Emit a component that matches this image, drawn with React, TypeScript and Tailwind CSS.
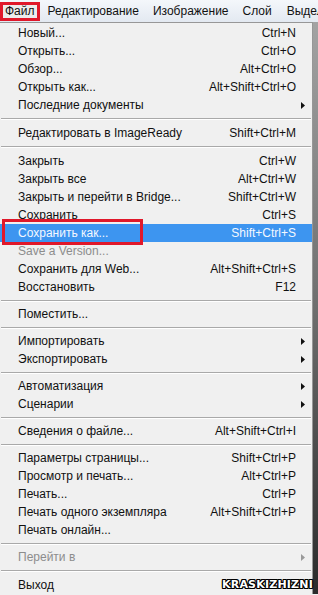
import React from "react";

type Item =
  | { sep: true; h: number }
  | { label: string; keys?: string; sub?: boolean; disabled?: boolean; active?: boolean };

const items: Item[] = [
  { label: "Новый...", keys: "Ctrl+N" },
  { label: "Открыть...", keys: "Ctrl+O" },
  { label: "Обзор...", keys: "Alt+Ctrl+O" },
  { label: "Открыть как...", keys: "Alt+Shift+Ctrl+O" },
  { label: "Последние документы", sub: true },
  { sep: true, h: 10 },
  { label: "Редактировать в ImageReady", keys: "Shift+Ctrl+M" },
  { sep: true, h: 10 },
  { label: "Закрыть", keys: "Ctrl+W" },
  { label: "Закрыть все", keys: "Alt+Ctrl+W" },
  { label: "Закрыть и перейти в Bridge...", keys: "Shift+Ctrl+W" },
  { label: "Сохранить", keys: "Ctrl+S" },
  { label: "Сохранить как...", keys: "Shift+Ctrl+S", active: true },
  { label: "Save a Version...", disabled: true },
  { label: "Сохранить для Web...", keys: "Alt+Shift+Ctrl+S" },
  { label: "Восстановить", keys: "F12" },
  { sep: true, h: 9 },
  { label: "Поместить..." },
  { sep: true, h: 9 },
  { label: "Импортировать", sub: true },
  { label: "Экспортировать", sub: true },
  { sep: true, h: 9 },
  { label: "Автоматизация", sub: true },
  { label: "Сценарии", sub: true },
  { sep: true, h: 9 },
  { label: "Сведения о файле...", keys: "Alt+Shift+Ctrl+I" },
  { sep: true, h: 9 },
  { label: "Параметры страницы...", keys: "Shift+Ctrl+P" },
  { label: "Просмотр и печать...", keys: "Alt+Ctrl+P" },
  { label: "Печать...", keys: "Ctrl+P" },
  { label: "Печать одного экземпляра", keys: "Alt+Shift+Ctrl+P" },
  { label: "Печать онлайн..." },
  { sep: true, h: 9 },
  { label: "Перейти в", sub: true, disabled: true },
  { sep: true, h: 10 },
  { label: "Выход" },
];

function Arrow({ color }: { color: string }) {
  return (
    <svg width="4" height="7" viewBox="0 0 4 7">
      <path d="M0 0 L4 3.5 L0 7 Z" fill={color} />
    </svg>
  );
}

export default function App() {
  return (
    <div className="relative h-[595px] w-[318px] overflow-hidden bg-[#f0f0f0] font-['Liberation_Sans',Arial,sans-serif] text-[12px] text-[#111]">
      {/* menu bar */}
      <div className="flex h-[22px] items-center overflow-hidden bg-gradient-to-b from-[#f4f7fb] to-[#e3e9f1] whitespace-nowrap">
        <span className="flex h-[19px] items-center border-[3px] border-[#e0182a] bg-[#ececec] px-[2px] leading-none">
          Файл
        </span>
        <span className="ml-[8px]">Редактирование</span>
        <span className="ml-[14px]">Изображение</span>
        <span className="ml-[14px]">Слой</span>
        <span className="ml-[15px]">Выдел</span>
      </div>

      <div className="flex">
        {/* drop-down menu */}
        <div className="w-[313px] border-r border-t border-[#979797] bg-[#f0f0f0] pt-[1px]">
          {items.map((it, i) =>
            "sep" in it ? (
              <div key={i} className="flex flex-col justify-center" style={{ height: it.h }}>
                <div className="mx-[1px] h-px bg-[#a9a9a9]" />
                <div className="mx-[1px] h-px bg-white" />
              </div>
            ) : (
              <div
                key={i}
                className={
                  "flex h-[18px] items-center whitespace-nowrap pl-[18px] " +
                  (it.active ? "bg-[#3d95f0] text-[#f4f8ff]" : it.disabled ? "text-[#8d8d8d]" : "")
                }
              >
                <span className="flex-1">{it.label}</span>
                <span className="text-right">{it.keys}</span>
                <span className="flex w-[16px] justify-end pr-[7px]">
                  {it.sub && <Arrow color={it.disabled ? "#9a9a9a" : "#111"} />}
                </span>
              </div>
            )
          )}
        </div>
        {/* window behind */}
        <div className="flex-1 bg-gradient-to-b from-[#a3a3a3] via-[#6e6e6e] to-[#2b2b2b]" />
      </div>

      {/* annotation frame */}
      <div className="absolute left-[2px] top-[219px] h-[26px] w-[141px] border-[3px] border-[#e0182a]" />

      {/* watermark */}
      <div
        className="absolute left-[222px] top-[578px] whitespace-nowrap font-['DejaVu_Sans',sans-serif] text-[11px] font-bold leading-[14px] tracking-[0.2px] text-white"
        style={{
          textShadow:
            "1px 0 0 #000,-1px 0 0 #000,0 1px 0 #000,0 -1px 0 #000,1px 1px 0 #000,-1px -1px 0 #000,1px -1px 0 #000,-1px 1px 0 #000",
        }}
      >
        KRASKIZHIZNI
      </div>
    </div>
  );
}
